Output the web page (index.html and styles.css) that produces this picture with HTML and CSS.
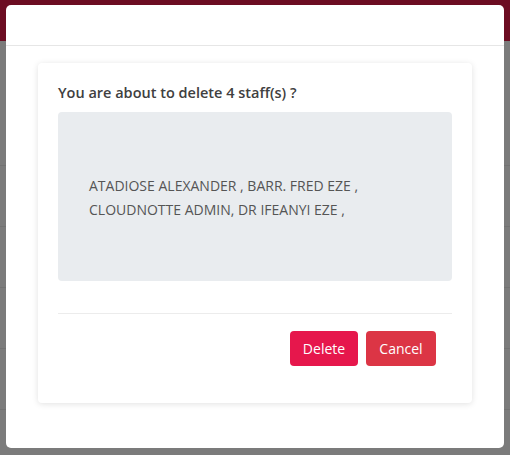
FILE: index.html
```html
<!DOCTYPE html>
<html>
<head>
<meta charset="utf-8">
<link rel="stylesheet" href="styles.css">
</head>
<body>
<div class="page">
  <div class="topbar"></div>
  <div class="rows">
    <div class="row r1"></div>
    <div class="row"></div>
    <div class="row"></div>
    <div class="row"></div>
    <div class="row"></div>
    <div class="row"></div>
  </div>
</div>
<div class="modal">
  <div class="modal-header"></div>
  <div class="modal-body">
    <div class="card">
      <h4 class="title">You are about to delete 4 staff(s) ?</h4>
      <div class="names">
        <p>ATADIOSE ALEXANDER , BARR. FRED EZE ,<br>CLOUDNOTTE ADMIN, DR IFEANYI EZE ,</p>
      </div>
      <hr class="divider">
      <div class="actions">
        <button class="btn btn-delete">Delete</button>
        <button class="btn btn-cancel">Cancel</button>
      </div>
    </div>
  </div>
</div>
</body>
</html>
```
FILE: styles.css
```css
* { box-sizing: border-box; }
html, body { margin: 0; padding: 0; }
body {
  width: 510px;
  height: 455px;
  overflow: hidden;
  background: #7b7b7b;
  font-family: "Open Sans", "Liberation Sans", sans-serif;
  position: relative;
}
.page { width: 100%; }
.topbar { height: 41px; background: #6c0d22; }
.rows { display: flex; flex-direction: column; }
.row { height: 61px; border-bottom: 1px solid #727272; }
.row.r1 { height: 125px; }

.modal {
  position: absolute;
  left: 6px;
  top: 5px;
  width: 498px;
  height: 443px;
  background: #fff;
  border-radius: 5px;
  display: flex;
  flex-direction: column;
}
.modal-header {
  height: 41px;
  border-bottom: 1px solid #e6e6e6;
}
.modal-body {
  padding: 17px 32px 0 32px;
}
.card {
  background: #fff;
  border-radius: 4px;
  box-shadow: 0 1px 6px rgba(0,0,0,0.12);
  padding: 20px 20px 37px 20px;
}
.title {
  margin: 0 0 9px 0;
  font-size: 14.5px;
  font-weight: 600;
  line-height: 20px;
  color: #404040;
}
.names {
  background: #e9ecef;
  border-radius: 4px;
  height: 169px;
  display: flex;
  align-items: center;
  padding: 2px 31px 0 31px;
}
.names p {
  margin: 0;
  font-size: 14px;
  line-height: 24px;
  color: #555;
}
.divider {
  margin: 32px 0 0 0;
  border: 0;
  border-top: 1px solid #ececec;
}
.actions {
  display: flex;
  justify-content: flex-end;
  gap: 8px;
  padding: 17px 16px 0 0;
}
.btn {
  font-family: "Open Sans", "Liberation Sans", sans-serif;
  font-size: 14px;
  color: #fff;
  border: 0;
  border-radius: 4px;
  height: 35px;
  padding: 0;
  line-height: 35px;
}
.btn-delete { background: #e6174c; width: 68px; }
.btn-cancel { background: #dc3545; width: 70px; }
```
